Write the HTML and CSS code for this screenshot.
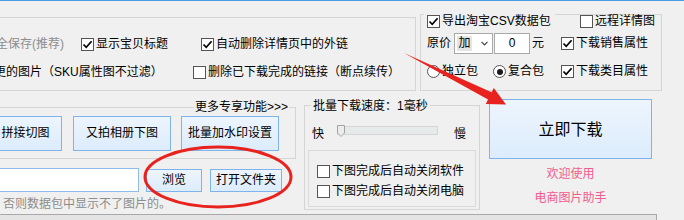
FILE: index.html
```html
<!DOCTYPE html>
<html lang="zh-CN">
<head>
<meta charset="utf-8">
<title>电商图片助手</title>
<link rel="stylesheet" href="styles.css">
</head>
<body>
<div class="win">
  <div class="top">
    <div class="grp-a">
      <div class="row row-a1">
        <span class="c-a1 dis">全保存(推荐)</span>
        <label class="c-a2 cb"><span class="box"><svg viewBox="0 0 11 11"><path d="M1.5 5.5 L4.2 8.3 L9.6 2.2"/></svg></span>显示宝贝标题</label>
        <label class="cb"><span class="box"><svg viewBox="0 0 11 11"><path d="M1.5 5.5 L4.2 8.3 L9.6 2.2"/></svg></span>自动删除详情页中的外链</label>
      </div>
      <div class="row row-a2">
        <span class="c-b1">更的图片（SKU属性图不过滤）</span>
        <label class="cb"><span class="box"></span>删除已下载完成的链接（断点续传）</label>
      </div>
    </div>
    <div class="grp-b">
      <div class="b-head">
        <span class="seg seg-l"></span>
        <label class="b-cap cb"><span class="box"><svg viewBox="0 0 11 11"><path d="M1.5 5.5 L4.2 8.3 L9.6 2.2"/></svg></span>导出淘宝CSV数据包</label>
        <span class="seg seg-r"><label class="cb"><span class="box"></span>远程详情图</label></span>
      </div>
      <div class="row row-b2">
        <span>原价</span>
        <span class="sel"><span class="sel-v">加</span><svg class="chev" viewBox="0 0 7 5"><path d="M0.5 0.8 L3.5 3.8 L6.5 0.8"/></svg></span>
        <span class="num">0</span>
        <span class="yuan">元</span>
        <label class="cb push"><span class="box"><svg viewBox="0 0 11 11"><path d="M1.5 5.5 L4.2 8.3 L9.6 2.2"/></svg></span>下载销售属性</label>
      </div>
      <div class="row row-b3">
        <label class="c-r1 rb"><span class="dot"></span>独立包</label>
        <label class="c-r2 rb"><span class="dot on"></span>复合包</label>
        <label class="cb"><span class="box"><svg viewBox="0 0 11 11"><path d="M1.5 5.5 L4.2 8.3 L9.6 2.2"/></svg></span>下载类目属性</label>
      </div>
    </div>
  </div>

  <div class="mid">
    <div class="col-l">
      <div class="grp-c">
        <div class="cap-r"><span class="cap">更多专享功能&gt;&gt;&gt;</span></div>
        <div class="btns">
          <span class="btn b1">拼接切图</span>
          <span class="btn b2">又拍相册下图</span>
          <span class="btn b3">批量加水印设置</span>
        </div>
      </div>
      <div class="path">
        <span class="inp"></span>
        <span class="btn b-browse">浏览</span>
        <span class="btn b-open">打开文件夹</span>
      </div>
      <div class="note">否则数据包中显示不了图片的。</div>
    </div>

    <div class="grp-d">
      <span class="cap cap-l">批量下载速度：1毫秒</span>
      <div class="speed">
        <span class="lbl">快</span>
        <span class="track"><svg class="thumb" viewBox="0 0 8 12"><path d="M0.5 0.5 H7.5 V8 L4 11.5 L0.5 8 Z"/></svg></span>
        <span class="lbl slow">慢</span>
      </div>
      <div class="inner">
        <label class="cb"><span class="box"></span>下图完成后自动关闭软件</label>
        <label class="cb"><span class="box"></span>下图完成后自动关闭电脑</label>
      </div>
    </div>

    <div class="col-r">
      <span class="btn b-go">立即下载</span>
      <div class="pink w1">欢迎使用</div>
      <div class="pink w2">电商图片助手</div>
    </div>
  </div>

  <div class="status"></div>

  <svg class="mark" viewBox="0 0 684 220">
    <polygon class="arrow" points="404,53 491.6,92.3 493.8,87.9 506,104.5 485.8,103.9 488,99.5"/>
    <ellipse class="ring" cx="218" cy="177" rx="73" ry="30"/>
  </svg>
</div>
</body>
</html>
```

FILE: styles.css
```css
* { box-sizing: border-box; margin: 0; padding: 0; }
html, body { margin: 0; background: #f0f0f0; }
body {
  font-family: "Liberation Sans", "Noto Sans CJK SC", sans-serif;
  font-size: 12px;
  line-height: 13px;
  color: #000;
}
.win {
  position: relative;
  width: 684px;
  height: 220px;
  overflow: hidden;
  background: #f0f0f0;
  border-top: 1px solid #4d9be5;
}

/* ---------- top ---------- */
.top { display: flex; align-items: flex-start; height: 90px; }
.grp-a {
  flex: none;
  margin-left: -10px;
  margin-top: 16px;
  width: 426px;
  height: 74px;
  border: 1px solid #d5d5d5;
}
.row { display: flex; align-items: center; height: 13px; white-space: nowrap; }
.row-a1 { margin-top: 20px; padding-left: 5px; }
.row-a2 { margin-top: 15px; }
.c-a1 { width: 85px; flex: none; }
.c-a2 { width: 120px; flex: none; }
.c-b1 { width: 199px; margin-left: 3px; flex: none; }
.dis { color: #8d8d8d; }

.cb, .rb { display: flex; align-items: center; gap: 2px; white-space: nowrap; }
.box {
  flex: none;
  width: 13px;
  height: 13px;
  border: 1px solid #555;
  background: #fff;
  display: flex;
  align-items: center;
  justify-content: center;
}
.box svg { width: 11px; height: 11px; }
.box path { fill: none; stroke: #000; stroke-width: 1.7; }
.dot {
  flex: none;
  width: 13px;
  height: 13px;
  border-radius: 50%;
  border: 1px solid #555;
  background: #fff;
  display: flex;
  align-items: center;
  justify-content: center;
}
.dot.on::after {
  content: "";
  width: 6px;
  height: 6px;
  border-radius: 50%;
  background: #1a1a1a;
}

.grp-b {
  flex: none;
  margin-left: 4px;
  margin-top: 13px;
  width: 242px;
  height: 77px;
  border: 1px solid #d5d5d5;
  border-top: 0;
}
.b-head { display: flex; align-items: flex-start; height: 14px; }
.seg { border-top: 1px solid #d5d5d5; height: 14px; }
.seg-l { width: 3px; flex: none; }
.b-cap { width: 131px; flex: none; height: 14px; padding: 1px 0 0 3px; }
.seg-r { flex: 1; display: flex; padding-left: 25px; }
.row-b2 { margin-top: 5px; height: 21px; padding-left: 6px; }
.row-b3 { margin-top: 11px; padding-left: 6px; }
.sel {
  flex: none;
  margin-left: 3px;
  width: 39px;
  height: 21px;
  border: 1px solid #a9a9a9;
  background: #fff;
  display: flex;
  align-items: center;
}
.sel-v {
  margin-left: 2px;
  width: 15px;
  height: 15px;
  line-height: 15px;
  text-align: center;
  background: #e4e4e4;
}
.chev { margin-left: 9px; width: 7px; height: 5px; }
.chev path { fill: none; stroke: #444; stroke-width: 1.2; }
.num {
  flex: none;
  margin-left: 1px;
  width: 36px;
  height: 21px;
  border: 1px solid #a9a9a9;
  background: #fff;
  line-height: 19px;
  text-align: center;
}
.yuan { margin-left: 2px; }
.push { margin-left: 17px; }
.c-r1 { width: 66px; flex: none; }
.c-r2 { width: 68px; flex: none; }

/* ---------- middle ---------- */
.mid { display: flex; align-items: flex-start; height: 123px; }
.col-l { flex: none; margin-left: -10px; width: 306px; }
.grp-c { margin-top: 16px; height: 52px; border: 1px solid #d5d5d5; }
.cap-r { display: flex; justify-content: flex-end; padding-right: 6px; margin-top: -7px; }
.cap { background: #f0f0f0; padding: 0 1px; line-height: 13px; white-space: nowrap; }
.btns { display: flex; margin-top: 2px; }
.btn {
  flex: none;
  display: flex;
  align-items: center;
  justify-content: center;
  border: 1px solid #7eb4ea;
  background: linear-gradient(#edf5fd, #dcecfc);
  white-space: nowrap;
}
.b1 { margin-left: -2px; width: 73px; height: 35px; }
.b2 { margin-left: 11px; width: 98px; height: 35px; }
.b3 { margin-left: 10px; width: 98px; height: 35px; }
.path { display: flex; align-items: flex-end; margin-top: 9px; }
.inp { flex: none; width: 149px; height: 24px; border: 1px solid #8dbbea; background: #fff; }
.b-browse { margin-left: 7px; width: 56px; height: 23px; }
.b-open { margin-left: 8px; width: 72px; height: 23px; }
.note { margin-top: 6px; padding-left: 13px; color: #8d8d8d; white-space: nowrap; }

.grp-d {
  flex: none;
  margin-left: 8px;
  margin-top: 14px;
  width: 176px;
  height: 105px;
  border: 1px solid #d5d5d5;
  display: flex;
  flex-direction: column;
  align-items: flex-start;
}
.cap-l { margin-top: -6px; margin-left: 6px; padding: 0 2px; }
.speed { display: flex; align-items: flex-start; margin-top: 12px; padding-left: 7px; height: 14px; white-space: nowrap; }
.lbl { margin-top: 2px; line-height: 14px; }
.track {
  position: relative;
  flex: none;
  margin-left: 13px;
  margin-top: 1px;
  width: 101px;
  height: 9px;
  border: 1px solid #d6d6d6;
  background: #e7eaea;
}
.thumb { position: absolute; left: -1px; top: -2px; width: 8px; height: 12px; }
.thumb path { fill: #ececec; stroke: #a3a3a3; stroke-width: 1; }
.slow { margin-left: 16px; }
.inner {
  margin-left: 3px;
  margin-top: 11px;
  width: 168px;
  height: 57px;
  border: 1px solid #dadada;
  padding: 14px 0 0 8px;
}
.inner .cb { height: 13px; }
.inner .cb + .cb { margin-top: 7px; }

.col-r { flex: none; margin-left: 9px; width: 163px; text-align: center; }
.b-go { margin-top: 8px; width: 163px; height: 60px; font-size: 16px; }
.pink { color: #f25b8c; line-height: 13px; white-space: nowrap; }
.w1 { margin-top: 9px; }
.w2 { margin-top: 11px; }

/* ---------- bottom ---------- */
.status {
  width: 657px;
  height: 6px;
  border-top: 1px solid #a9a9a9;
  border-right: 1px solid #a9a9a9;
  background: #e4e4e4;
}

/* ---------- annotations ---------- */
.mark { position: absolute; left: 0; top: -1px; width: 684px; height: 220px; pointer-events: none; }
.arrow { fill: #e8221e; }
.ring { fill: none; stroke: #e8221e; stroke-width: 3; }
```
